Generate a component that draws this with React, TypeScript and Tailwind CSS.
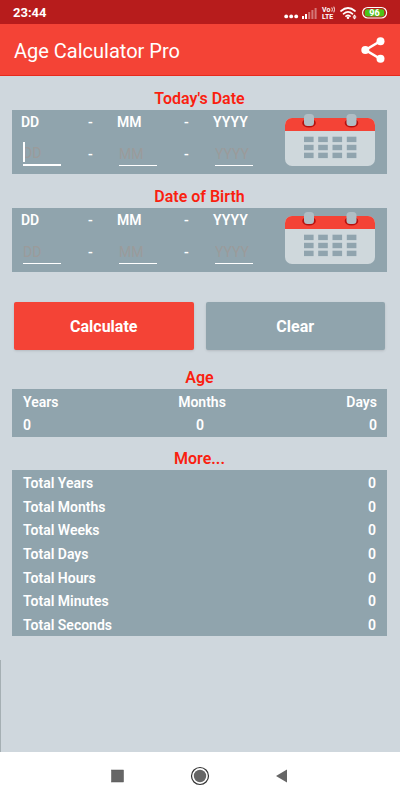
interface DateCardProps {
  id: string;
  title: string;
  focused?: boolean;
}

const parts = [
  { key: 'day', label: 'DD', maxLength: 2 },
  { key: 'month', label: 'MM', maxLength: 2 },
  { key: 'year', label: 'YYYY', maxLength: 4 },
];

const totals = ['Years', 'Months', 'Weeks', 'Days', 'Hours', 'Minutes', 'Seconds'];

function CalendarIcon() {
  return (
    <svg className="w-[90px] h-[54px]" viewBox="0 0 90 54" aria-hidden="true">
      <rect x="0" y="5" width="90" height="48" rx="7" fill="#cfd8dc" />
      <path d="M0 18V12a7 7 0 0 1 7-7h76a7 7 0 0 1 7 7v6z" fill="#f44336" />
      {[24, 66.5].map((x) => (
        <g key={x}>
          <ellipse cx={x} cy="10" rx="6.8" ry="4.6" fill="#b5100e" />
          <rect x={x - 5} y="1" width="10" height="12" rx="3.5" fill="#b0bec5" />
        </g>
      ))}
      {[23.7, 31.8, 39.7].map((y) =>
        [19, 33.2, 47.5, 61.8].map((x) => (
          <rect key={`${x}-${y}`} x={x} y={y} width="9.6" height="5.4" fill="#90a4ae" />
        ))
      )}
    </svg>
  );
}

function SectionTitle({ children }: { children: string }) {
  return <h2 className="h-6 pt-px text-center text-base leading-6 font-semibold text-[#fa1f10]">{children}</h2>;
}

function DateCard({ id, title, focused = false }: DateCardProps) {
  return (
    <section>
      <SectionTitle>{title}</SectionTitle>
      <div className="flex h-16 items-start bg-[#90a4ad] pl-[9px] pr-3 text-sm font-medium text-white">
        <div className="grid flex-1 grid-cols-[67fr_29fr_67fr_29fr_72fr] grid-rows-[24px_40px] items-center">
          {parts.map((part, i) => (
            <div key={part.key} className="contents">
              <label htmlFor={`${id}-${part.key}`} className="font-semibold">{part.label}</label>
              {i < 2 && <span>-</span>}
            </div>
          ))}
          {parts.map((part, i) => {
            const active = focused && i === 0;
            return (
              <div key={part.key} className="contents">
                <div className="relative ml-0.5">
                  <input
                    id={`${id}-${part.key}`}
                    type="text"
                    inputMode="numeric"
                    maxLength={part.maxLength}
                    placeholder={part.label}
                    className={`block h-6 w-[38px] border-white bg-transparent font-normal outline-none placeholder:text-[#9b9b9b] ${
                      active ? 'border-b-2' : 'border-b'
                    }`}
                  />
                  {active && <span className="absolute left-0 top-0 h-5 w-0.5 bg-white" />}
                </div>
                {i < 2 && <span>-</span>}
              </div>
            );
          })}
        </div>
        <button type="button" aria-label={`Pick ${title}`} className="mt-[3px]">
          <CalendarIcon />
        </button>
      </div>
    </section>
  );
}

function StatusBar() {
  return (
    <div className="flex h-6 items-center justify-between bg-[#b71c1c] pl-[13px] pr-3 pt-px text-white">
      <span className="text-[13px] leading-5 font-bold">23:44</span>
      <svg className="h-6 w-[104px]" viewBox="0 0 104 24" aria-hidden="true">
        <g fill="#fff">
          <circle cx="2.2" cy="15.4" r="1.9" />
          <circle cx="7.2" cy="15.4" r="1.9" />
          <circle cx="12.2" cy="15.4" r="1.9" />
          <path d="M18 15h2v3h-2zM21 13h2v5h-2z" />
          <path d="M24.2 11h2v7h-2zM27.4 9h2v9h-2zM30.6 7h2v11h-2z" opacity=".4" />
        </g>
        <g fill="#fff" fontFamily="Roboto, sans-serif" fontWeight="700" fontSize="7">
          <text x="38" y="11">Vo</text>
          <text x="38" y="17.800">LTE</text>
        </g>
        <g fill="none" stroke="#fff" strokeLinecap="round">
          <path d="M48 6.800q1 1.500 0 3.500M50 6q1.200 2.500 0 5" strokeWidth=".9" />
          <path d="M57 10q7-6 14 0M59.500 12.800q4.500-4 9 0M62 15.200q2-1.600 4 0" strokeWidth="1.700" />
        </g>
        <circle cx="64" cy="16.800" r="1.300" fill="#fff" />
        <path d="M70.500 13.500l2 2.200h-4zM70.500 18.500l2-2.200h-4z" fill="#fff" />
        <rect x="78.600" y="6.500" width="24" height="10.500" rx="5.200" fill="none" stroke="#fff" strokeWidth="1.200" />
        <rect x="80.800" y="8.200" width="19.500" height="7.200" rx="2.500" fill="#4cc417" />
        <text x="90.500" y="15" textAnchor="middle" fontSize="9" fontWeight="800" fontFamily="Roboto, sans-serif" fill="#fff">96</text>
      </svg>
    </div>
  );
}

export default function App() {
  return (
    <div className="flex min-h-screen flex-col bg-[#cfd7dd] font-[Roboto,sans-serif]">
      <StatusBar />
      <header className="flex h-[52px] items-center justify-between border-b border-[#e62a1c] bg-[#f44336] pl-3.5 pr-[15px] text-white">
        <h1 className="pt-0.5 text-xl">Age Calculator Pro</h1>
        <button type="button" aria-label="Share">
          <svg className="h-[26px] w-6" viewBox="0 0 24 26" fill="#fff">
            <path d="M19.500 4L4.500 13l15 9" fill="none" stroke="#fff" strokeWidth="2.600" />
            <circle cx="19.500" cy="4.200" r="4" />
            <circle cx="4.300" cy="13" r="4" />
            <circle cx="19.500" cy="21.800" r="4" />
          </svg>
        </button>
      </header>

      <main className="flex flex-1 flex-col pt-2.5">
        <div className="pl-3 pr-[13px]">
          <div className="flex flex-col gap-2.5">
            <DateCard id="today" title="Today's Date" focused />
            <DateCard id="birth" title="Date of Birth" />
          </div>

          <div className="mt-[30px] grid grid-cols-2 gap-3 px-0.5">
            <button type="button" className="h-12 rounded-xs bg-[#f44336] pt-px text-base font-bold text-white shadow">
              Calculate
            </button>
            <button type="button" className="h-12 rounded-xs bg-[#90a4ad] pt-px text-base font-bold text-white shadow">
              Clear
            </button>
          </div>

          <section className="mt-[15px]">
            <SectionTitle>Age</SectionTitle>
            <div className="bg-[#90a4ad] pl-[11px] pr-2.5">
              <table className="w-full table-fixed text-sm text-white">
                <thead>
                  <tr className="h-6">
                    <th className="pt-px text-left font-semibold">Years</th>
                    <th className="pt-px pl-1 text-center font-semibold">Months</th>
                    <th className="pt-px text-right font-semibold">Days</th>
                  </tr>
                </thead>
                <tbody>
                  <tr className="h-6 font-semibold">
                    <td className="text-left">0</td>
                    <td className="text-center">0</td>
                    <td className="text-right">0</td>
                  </tr>
                </tbody>
              </table>
            </div>
          </section>

          <section className="mt-[9px]">
            <SectionTitle>More...</SectionTitle>
            <div className="bg-[#90a4ad] px-[11px]">
              <table className="h-[166px] w-full text-sm text-white">
                <tbody>
                  {totals.map((unit) => (
                    <tr key={unit}>
                      <th scope="row" className="pt-0.5 text-left font-semibold">Total {unit}</th>
                      <td className="pt-0.5 text-right font-semibold">0</td>
                    </tr>
                  ))}
                </tbody>
              </table>
            </div>
          </section>
        </div>

        <div className="mt-6 flex-1 border-l border-[#a5afb3]" />
      </main>

      <nav className="flex h-12 items-center justify-center gap-[62px] bg-white">
        <button type="button" aria-label="Recent apps">
          <svg className="size-5" viewBox="0 0 20 20">
            <rect x="3.500" y="4" width="12" height="12" fill="#666" stroke="#555" strokeWidth=".5" />
          </svg>
        </button>
        <button type="button" aria-label="Home">
          <svg className="size-5" viewBox="0 0 20 20">
            <circle cx="10" cy="10" r="8.500" fill="none" stroke="#333" strokeWidth="1.200" />
            <circle cx="10" cy="10" r="6.200" fill="#666" />
          </svg>
        </button>
        <button type="button" aria-label="Back">
          <svg className="size-5" viewBox="0 0 20 20">
            <path d="M4 10l11-6.500v13z" fill="#666" />
          </svg>
        </button>
      </nav>
    </div>
  );
}
